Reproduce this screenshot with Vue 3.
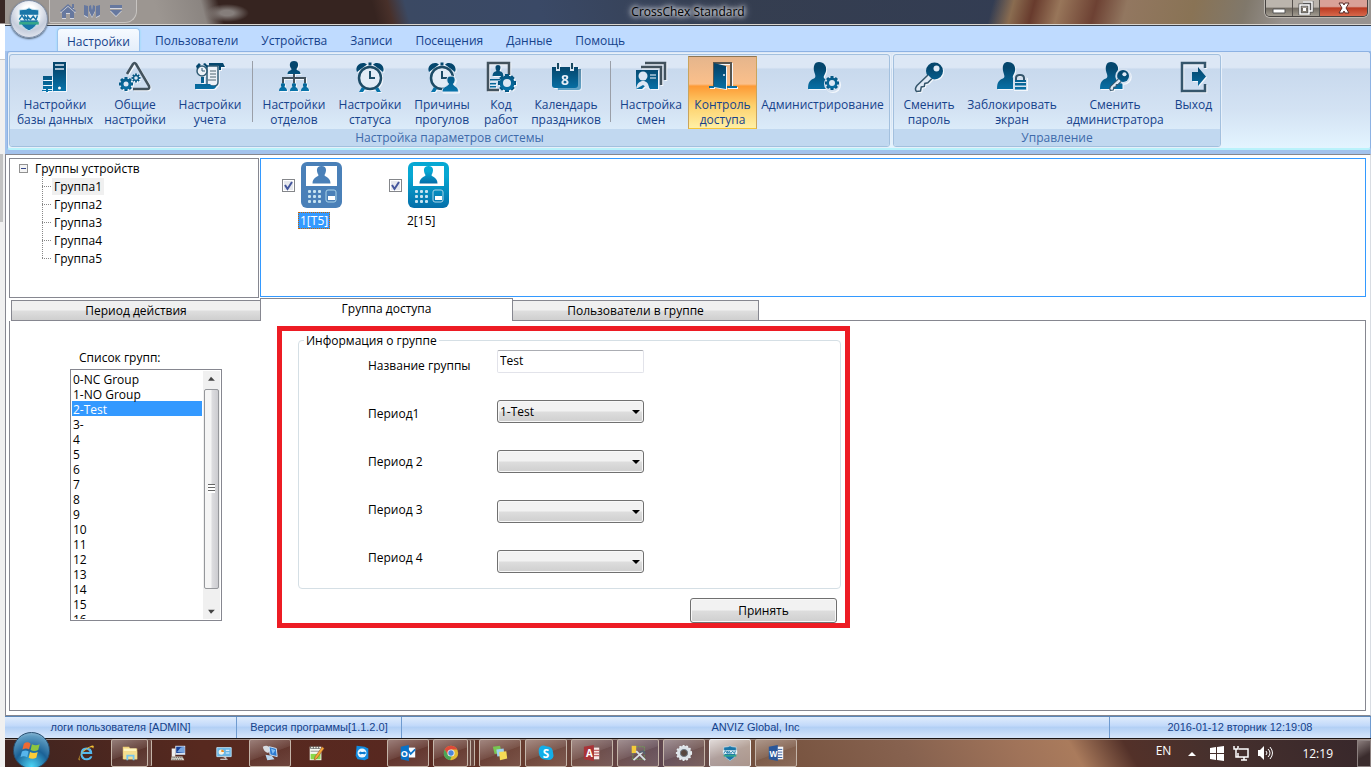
<script setup>
import { ref } from 'vue'

const menu = ['Настройки', 'Пользователи', 'Устройства', 'Записи', 'Посещения', 'Данные', 'Помощь']

const person = 'M12 1c5 0 8 4 7 9-.5 3-3 5-2 7 1.500 2.500 6 2.500 6.500 6.500V28H1c0-7 2-9 6-10.500 2.500-1.500 1-4 .3-6.500C6 6 7 1 12 1z'
const key = '<circle cx="21.500" cy="10" r="8.500"/><circle cx="23.500" cy="7.500" r="3" fill="#dfe9f5"/><path d="M15 14L4 24.500c-1.500 2-2 4.500-.5 6l4-.5.8-4 3-.6.5-3 3-.7 4-4" fill="#dfe9f5" stroke="#35566c" stroke-width="1.500"/>'
const gear = (x, y, r, hole) => {
  let teeth = ''
  for (let i = 0; i < 8; i++) teeth += `<rect x="${x - r / 4}" y="${y - r - 1}" width="${r / 2}" height="3" transform="rotate(${i * 45} ${x} ${y})"/>`
  return `${teeth}<circle cx="${x}" cy="${y}" r="${r - 0.5}"/><circle cx="${x}" cy="${y}" r="${hole}" fill="#dce7f4"/>`
}
const alarm = '<path d="M3 11C1 7 4 2 9 2c2 0 3 .6 4 1.600zM29 11c2-4-1-9-6-9-2 0-3 .6-4 1.600z"/><path d="M14.500 1.500h3v3h-3z"/><circle cx="16" cy="17" r="11" fill="#e2ebf6" stroke="#1d4b66" stroke-width="2.500"/><path d="M16 10v7h5" fill="none" stroke="#1d4b66" stroke-width="2"/><path d="M8 26l-3 5h4l2-3zM24 26l3 5h-4l-2-3z"/>'

const icons = {
  db: '<path d="M14 1h13v29H14z"/><path d="M16 4h9M16 8h9" stroke="#dce7f4" stroke-width="1.500"/><circle cx="20.500" cy="27" r="1.500" fill="#fff"/><path d="M4 15h9v4H4zM4 20h9v4H4zM4 25h9v3H4zM3 29h10v1H3z"/><path d="M7 28h2v3H7z"/>',
  common: '<path d="M8 13L14 3q1.500-2 3 0l13 22q1 3-2 3H14" fill="none" stroke="#42525d" stroke-width="2.500"/>' + gear(7, 23, 6, 2.5) + gear(17, 17, 3.5, 1.8),
  account: '<path d="M15 2h14l2 4h-4v3h-2V5H15z"/><path d="M15 5h9v16q0 4-4 4h-7V5z" fill="#edf2f8" stroke="#315c75" stroke-width="1.500"/><path d="M16 10h6M16 13h6M16 16h6M14 19h8" stroke="#4d6471"/><circle cx="8" cy="10" r="5" fill="#edf2f8" stroke="#315c75" stroke-width="1.500"/><path d="M8 7v3h3" fill="none" stroke="#315c75"/><path d="M2 5l3-3 2 2-4 4zM9 3l2-1 3 3-1 2zM7 16h3v6H7zM1 23h15q1 2 4 2 3 0 3-2-1 5-4 5H1z"/>',
  org: '<path d="M16 0c5 0 5 5 2.500 8 0 2 4 1 4 5h-13c0-4 4-3 4-5C11 5 11 0 16 0z"/><path d="M16 13v8M5 22v-5h22v5M16 17v5" fill="none" stroke="#42525d" stroke-width="2"/><path d="M5 22c3 0 2 3 1.500 4 2 1 2.500 2 2.500 4H1c0-2 .5-3 2.500-4C3 25 2 22 5 22zM16 22c3 0 2 3 1.500 4 2 1 2.500 2 2.500 4h-8c0-2 .5-3 2.500-4C14 25 13 22 16 22zM27 22c3 0 2 3 1.500 4 2 1 2.500 2 2.500 4h-8c0-2 .5-3 2.500-4C25 25 24 22 27 22z"/>',
  alarm,
  reason: alarm + '<path d="M25 15c5 0 5 5 2.500 8 0 3 5 1 5 8H16c0-6 5-5 6.500-8C20 20 20 15 25 15z" stroke="#dce7f4"/>',
  code: '<path d="M14 29H3V2h21v12" fill="none" stroke="#42525d" stroke-width="2.500"/><path d="M13 4c3 0 3 3 1.500 6 3 1 3.500 2 4 5h-11c.5-3 1-4 4-5C10 7 10 4 13 4zM5 18h10v1.500H5zM5 22h6v1.500H5zM5 25h6v1.500H5z"/>' + gear(22, 22, 8, 4),
  calendar: '<path d="M5 8h26v18q0 3-3 3H8z" opacity=".6"/><path d="M2 6h26v18q0 3-3 3H5q-3 0-3-3z"/><path d="M8 2v8M22 2v8" stroke="#dce7f4" stroke-width="4"/><path d="M8 2v6M22 2v6" stroke="#184961" stroke-width="2"/><text x="15" y="24" text-anchor="middle" font-family="Open Sans, sans-serif" font-weight="700" font-size="14" fill="#e5edf7">8</text>',
  shift: '<path d="M10 2h20v17M6 6h20v18" fill="none" stroke="#42525d" stroke-width="2.500"/><path d="M1 9h22v19h-8l-3-5-5 5H1z"/><circle cx="8" cy="15" r="4.500" fill="#dce7f4"/><path d="M1 28c1-6 4-8 7-8s6 2 6 8l-6-4z" fill="#dce7f4"/><path d="M15 14h6M15 17h6" stroke="#a9c5d8" stroke-width="1.500"/>',
  door: '<path d="M7 26V2h17v24" fill="none" stroke="#58554e" stroke-width="2"/><path d="M7 2l12 3v23L7 26z"/><path d="M2 25h5v2H2zM20 25h10v2H20z"/><circle cx="17" cy="14" r="1" fill="#e8edf2"/>',
  admin: `<path d="${person}"/><circle cx="25" cy="23" r="8" fill="#d3e0ef"/>` + gear(25, 22, 6, 3),
  key,
  lock: `<path d="${person}"/><path d="M17 16h14v13H17z" fill="#d3e0ef"/><path d="M20 20v-3q0-3 4-3t4 3v3" fill="none" stroke="#35566c" stroke-width="2"/><path d="M19 19h11v2H19zM19 22h11v2.500H19zM19 26h11v2.500H19z"/>`,
  change: `<path d="${person}"/><g transform="translate(9 8) scale(.7)"><circle cx="21.500" cy="10" r="11" fill="#d3e0ef"/>${key}</g>`,
  exit: '<path d="M27 7V2H4v28h23v-7" fill="none" stroke="#35566c" stroke-width="2.500"/><path d="M14 11h6V6l8 9.500L20 25v-5h-6z"/>',
}

const settings = [
  { icon: 'db', a: 'Настройки', b: 'базы данных' },
  { icon: 'common', a: 'Общие', b: 'настройки' },
  { icon: 'account', a: 'Настройки', b: 'учета' },
  null,
  { icon: 'org', a: 'Настройки', b: 'отделов' },
  { icon: 'alarm', a: 'Настройки', b: 'статуса' },
  { icon: 'reason', a: 'Причины', b: 'прогулов' },
  { icon: 'code', a: 'Код', b: 'работ' },
  { icon: 'calendar', a: 'Календарь', b: 'праздников' },
  null,
  { icon: 'shift', a: 'Настройка', b: 'смен' },
  { icon: 'door', a: 'Контроль', b: 'доступа', active: true },
  { icon: 'admin', a: 'Администрирование', b: '' },
]
const control = [
  { icon: 'key', a: 'Сменить', b: 'пароль' },
  { icon: 'lock', a: 'Заблокировать', b: 'экран' },
  { icon: 'change', a: 'Сменить', b: 'администратора' },
  { icon: 'exit', a: 'Выход', b: '' },
]
const ribbon = [
  { name: 'settings', caption: 'Настройка параметров системы', items: settings },
  { name: 'control', caption: 'Управление', items: control },
]

const tree = ['Группа1', 'Группа2', 'Группа3', 'Группа4', 'Группа5']
const devices = ref([
  { id: 'd1', name: '1[T5]', checked: true, selected: true },
  { id: 'd2', name: '2[15]', checked: true, selected: false },
])
const groups = ['0-NC Group', '1-NO Group', '2-Test', '3-', '4', '5', '6', '7', '8', '9', '10', '11', '12', '13', '14', '15', '16']
const group = ref('2-Test')
const groupName = ref('Test')
const periods = ref([
  { id: 'p1', label: 'Период1', value: '1-Test' },
  { id: 'p2', label: 'Период 2', value: '' },
  { id: 'p3', label: 'Период 3', value: '' },
  { id: 'p4', label: 'Период 4', value: '' },
])

const label = (x, y, size, t) => `<text x="${x}" y="${y}" text-anchor="middle" font-family="Open Sans, sans-serif" font-weight="700" font-size="${size}" fill="#fff">${t}</text>`
const shield = '<path d="M10 2l2 1 5 .5v7q-1 5-7 8-6-3-7-8v-7L8 3z" fill="#1976a8" stroke="#cfe6f2" stroke-width=".7"/><path d="M2 7h16v4H2z" fill="#e7f4f8"/><path d="M3 10.500l2-3 2 3V8l2 2.500V8l2 2.500L13 8l2 2.500 1-3" fill="none" stroke="#1976a8"/><path d="M3 12h14v2H3z" fill="#35a68a"/>'
const tasks = [
  { name: 'Internet Explorer', art: '<path d="M15 13.500Q12 17 8.500 15.500 6 14 6 11h11Q17 4 10.500 4 4 4 4 11q0 7 7 7 5 0 6-4.500z" fill="#54b9ee"/><path d="M6.500 9Q8 6 10.500 6T14 9z" fill="#5a3027"/><path d="M4 18Q0 19 3 13 8 5 16 2q4-1 2 3-1-2-4-1Q6 8 3 14q-1 4 1 4z" fill="#f1bf35"/>' },
  { name: 'Проводник', kind: 'stack1', art: '<path d="M2 3h7l1 2h8v12H2z" fill="#efd27a"/><path d="M3 5h14v3H3z" fill="#fff5bd"/><path d="M3 8h15v9H3z" fill="#f4df90"/><path d="M6 18v-6h9v6h-2v-4H8v4z" fill="#76c6ed"/>' },
  { name: 'Подключение', art: '<path d="M7 2h11v10H7z" fill="#d9e5f4"/><path d="M8 3h9v7H8z" fill="#163f98"/><path d="M9 9l4-5 4-1v7z" fill="#77a4df"/><path d="M3 5h4v9H3z" fill="#eee"/><path d="M3 14h12l2 4H2z" fill="#d5d3c8"/><path d="M4 15h11M3 17h12" stroke="#555" stroke-dasharray="1 1"/>' },
  { name: 'Панель управления', art: '<path d="M2 4h16v10H2z" fill="#69b6e6" stroke="#bfdff2"/><circle cx="7" cy="9" r="3" fill="#f4f4e8"/><path d="M7 9V6a3 3 0 013 3z" fill="#ef8e24"/><path d="M12 7h4M12 10h4" stroke="#fff"/><path d="M8 14h4v3H6h8" stroke="#ccc" fill="#ddd"/>' },
  { name: 'Сеть', kind: 'open', art: '<path d="M2 3q6-3 9 3L8 10Q3 9 2 3z" fill="#d8dde2"/><path d="M9 3l8 2 1 9-8-2z" fill="#2d7ad0" stroke="#d9ebfb"/><path d="M5 12l7 1 3 4-8 1z" fill="#bad7ef"/><path d="M11 5l5 2-3 4z" fill="#83bef2"/>' },
  { name: 'Блокнот', art: '<path d="M3 3h13v15H3z" fill="#f5f7ee"/><path d="M4 5h11M4 8h11" stroke="#888"/><path d="M4 11h11v6H4z" fill="#88d94b"/><path d="M4 2v3M7 2v3M10 2v3M13 2v3" stroke="#555"/><path d="M17 3l2 2-8 11-3 2 1-4z" fill="#f4a83a" stroke="#8c4824" stroke-width=".6"/>' },
  { name: 'TeamViewer', art: '<path d="M4 2l9 1 4 2v11l-4 2-8-1-2-4z" fill="#118be0"/><circle cx="10" cy="10" r="5" fill="#eaf6ff"/><path d="M6 10l3-2v1h3V8l3 2-3 2v-1H9v1z" fill="#087bd2"/>' },
  { name: 'Outlook', kind: 'open', art: '<path d="M8 4h10v11H8z" fill="#f7fbff"/><path d="M10 7l3 4 5-5" fill="none" stroke="#0c75ca" stroke-width="2"/><path d="M2 3l9-2v18l-9-2z" fill="#0872c8"/>' + label(6, 14, 10, 'O') },
  { name: 'Chrome', kind: 'stack2', art: '<circle cx="10" cy="10" r="8" fill="#e1ba31"/><path d="M10 2a8 8 0 017 4H10L6 12 3 6a8 8 0 017-4z" fill="#df4a3a"/><path d="M3 6l4 7h4l-2 5A8 8 0 013 6z" fill="#4aa657"/><circle cx="10" cy="10" r="4" fill="#eee"/><circle cx="10" cy="10" r="3" fill="#4a86db"/>' },
  { name: 'Заметки', kind: 'open', art: '<path d="M2 3l8-1 2 8-8 1z" fill="#78c651"/><path d="M6 6l8-1 1 8-8 1z" fill="#9ed1ed"/><path d="M9 9l8-1 1 8-8 2z" fill="#f5da55"/>' },
  { name: 'Skype', kind: 'open', art: '<path d="M5 2q3-1 5 .5 8 0 8 8 1 3-.5 5-2 3-6 2Q3 18 2 10 1 4 5 2z" fill="#13aee8"/>' + label(10, 15, 13, 'S') },
  { name: 'Access', kind: 'open', art: '<path d="M12 4h6v13h-6z" fill="#f8e9e7"/><path d="M12 7h6M12 10h6M12 13h6" stroke="#ad3335"/><path d="M1 3l11-2v18L1 17z" fill="#a93438"/>' + label(7, 14, 11, 'A') },
  { name: 'Инструменты', kind: 'open', art: '<path d="M5 3h12v14H4z" fill="none" stroke="#6ca252" stroke-dasharray="2 1"/><path d="M3 2h5v8H3z" fill="#f4cb3a"/><path d="M5 18l10-9M8 8l10 10" stroke="#d8e1e6" stroke-width="2"/><path d="M12 9l4-1 2 3" fill="none" stroke="#586371" stroke-width="2"/>' },
  { name: 'Службы', kind: 'open', art: '<circle cx="10" cy="10" r="6" fill="none" stroke="#dce2e7" stroke-width="4"/><circle cx="10" cy="10" r="8" fill="none" stroke="#e7edf1" stroke-width="2" stroke-dasharray="2 2"/><circle cx="10" cy="10" r="4" fill="#57473f" stroke="#71808c"/>' },
  { name: 'CrossChex', kind: 'active', art: shield },
  { name: 'Word', kind: 'open', art: '<path d="M11 3h7v14h-7z" fill="#f7f9fc"/><path d="M12 6h5M12 9h5M12 12h5M12 15h5" stroke="#2a579a"/><path d="M2 3l10-2v18L2 17z" fill="#2a579a"/>' + label(7, 14, 9, 'W') },
]
</script>

<template>
  <div class="screen">
    <div class="behind"></div>
    <div class="window">
      <svg class="defs" aria-hidden="true">
        <linearGradient id="ink" x1="0" y1="0" x2="0" y2="32" gradientUnits="userSpaceOnUse">
          <stop offset="0.2" stop-color="#04466d" /><stop offset="1" stop-color="#0878b0" />
        </linearGradient>
        <linearGradient id="cyan" x1="0" y1="0" x2="0" y2="1">
          <stop offset="0.3" stop-color="#07a8d3" /><stop offset="1" stop-color="#046ea9" />
        </linearGradient>
      </svg>

      <header class="titlebar">
        <button class="orb" aria-label="Меню программы"><svg viewBox="0 0 20 20" v-html="shield"></svg></button>
        <div class="quick">
          <button aria-label="Домой"><svg viewBox="0 0 16 16"><path d="M0 8l8-7 8 7-1 1-7-6-7 6z" /><path d="M2 9l6-5 6 5v6h-4v-5H6v5H2z" /><path d="M12 1h2v4h-2z" /></svg></button>
          <button aria-label="Вид"><svg viewBox="0 0 16 16"><path d="M0 2l4 1v11l-4-2zM12 3l4-1v10l-4 2zM5 3l2-1 1 5 1-5 2 1v5l-3 6-3-6z" /></svg></button>
          <button aria-label="Настроить панель"><svg viewBox="0 0 16 16"><path d="M2 2h12v3H2zM2 7h12l-6 6z" /></svg></button>
        </div>
        <h1>CrossChex Standard</h1>
        <div class="winbtns">
          <button aria-label="Свернуть"><svg viewBox="0 0 16 14"><path d="M2 8h12v4H2z" fill="#fff" stroke="#555" /></svg></button>
          <button aria-label="Восстановить"><svg viewBox="0 0 16 14"><path d="M5 1h9v9h-3M2 4h9v9H2z" fill="none" stroke="#555" stroke-width="3" /><path d="M5 1h9v9h-3M2 4h9v9H2z" fill="none" stroke="#fff" stroke-width="1.500" /><path d="M5 7h3v3H5z" fill="#fff" /></svg></button>
          <button class="close" aria-label="Закрыть"><svg viewBox="0 0 16 14"><path d="M3 2h4l1 2 1-2h4l-3 5 3 5H9L8 10l-1 2H3l3-5z" fill="#fff" stroke="#5b2c29" /></svg></button>
        </div>
      </header>

      <nav class="menu">
        <button v-for="(m, i) in menu" :key="m" :class="{ on: i === 0 }">{{ m }}</button>
      </nav>

      <div class="ribbon">
        <section v-for="g in ribbon" :key="g.name" class="rgroup" :class="g.name">
          <div class="items">
            <template v-for="(b, i) in g.items" :key="i">
              <button v-if="b" :class="{ active: b.active }">
                <svg viewBox="0 0 32 32" fill="url(#ink)" v-html="icons[b.icon]"></svg>
                <span>{{ b.a }}</span><span>{{ b.b }}</span>
              </button>
              <i v-else class="sep"></i>
            </template>
          </div>
          <div class="caption">{{ g.caption }}</div>
        </section>
      </div>

      <main class="main">
        <div class="top">
          <div class="tree">
            <div class="root"><button class="expander" aria-label="Свернуть группу"></button><span>Группы устройств</span></div>
            <ul>
              <li v-for="(t, i) in tree" :key="t"><span :class="{ picked: i === 0 }">{{ t }}</span></li>
            </ul>
          </div>
          <div class="devices">
            <div v-for="d in devices" :key="d.id" class="device">
              <span class="tick">
                <input :id="d.id" v-model="d.checked" type="checkbox">
                <svg v-if="d.checked" viewBox="0 0 13 13"><path d="M3 6l2.500 4L10 3" fill="none" stroke="#44569c" stroke-width="2" /></svg>
              </span>
              <svg class="reader" :class="{ dim: d.selected }" viewBox="0 0 41 48">
                <rect class="case" x="0" y="1" width="41" height="46" rx="6" />
                <path d="M5 5h31v20H5z" fill="#fff" />
                <path class="case" d="M20.500 5c6 0 5 6 3 9 0 2 6 2 6 8.500h-18c0-6.500 6-6.500 6-8.500-2-3-3-9 3-9z" />
                <g fill="#c7e3f1">
                  <template v-for="r in 3" :key="r"><rect v-for="c in 3" :key="c" :x="2 + c * 5" :y="24 + r * 5" width="3" height="3" rx="1" /></template>
                </g>
                <rect x="25" y="29" width="10" height="12" rx="2" fill="none" stroke="#a9d3e8" />
                <path d="M27 35h7v4h-7z" fill="#fff" />
              </svg>
              <label :for="d.id" :class="{ chosen: d.selected }">{{ d.name }}</label>
            </div>
          </div>
        </div>

        <div class="tabs" role="tablist">
          <button role="tab">Период действия</button>
          <button role="tab" class="on" aria-selected="true">Группа доступа</button>
          <button role="tab">Пользователи в группе</button>
          <i></i>
        </div>

        <div class="page">
          <div class="grouplist">
            <label for="groups">Список групп:</label>
            <div class="listbox">
              <select id="groups" v-model="group" size="16">
                <option v-for="g in groups" :key="g">{{ g }}</option>
              </select>
              <div class="scroll" aria-hidden="true">
                <svg viewBox="0 0 17 17"><path d="M5 10l3-4 4 4z" /></svg>
                <i></i>
                <svg viewBox="0 0 17 17"><path d="M5 7h7l-4 4z" /></svg>
              </div>
            </div>
          </div>

          <form class="frame" @submit.prevent>
            <fieldset>
              <legend>Информация о группе</legend>
              <div class="labels">
                <label for="gname">Название группы</label>
                <label v-for="p in periods" :key="p.id" :for="p.id">{{ p.label }}</label>
              </div>
              <div class="controls">
                <input id="gname" v-model="groupName" type="text">
                <span v-for="p in periods" :key="p.id" class="combo">
                  <select :id="p.id" v-model="p.value"><option></option><option>1-Test</option></select>
                </span>
              </div>
            </fieldset>
            <button class="apply" type="submit">Принять</button>
          </form>
        </div>
      </main>

      <footer class="status">
        <span>логи пользователя [ADMIN]</span>
        <span>Версия программы[1.1.2.0]</span>
        <span>ANVIZ Global, Inc</span>
        <span>2016-01-12 вторник 12:19:08</span>
      </footer>

      <div class="taskbar">
        <button class="start" aria-label="Пуск">
          <svg viewBox="0 0 24 24"><path d="M4 5q4-3 7 0l-1.500 6q-3-2-7 0z" fill="#ee6a32" /><path d="M12.500 5.500q4 2 8 0L19 11.500q-4 2-8 0z" fill="#8dc63f" /><path d="M2 13q4-2 7 0l-1.500 6q-4-2-7 0z" fill="#57b5ec" /><path d="M10.500 13.500q4 2 8 0L17 19.500q-4 2-8 0z" fill="#fccb37" /></svg>
        </button>
        <div class="apps">
          <button v-for="t in tasks" :key="t.name" :class="t.kind" :aria-label="t.name"><span><svg viewBox="0 0 20 20" v-html="t.art"></svg></span></button>
        </div>
        <div class="tray">
          <span class="lang">EN</span>
          <svg class="up" viewBox="0 0 8 5"><path d="M0 5l4-4 4 4z" /></svg>
          <svg viewBox="0 0 16 16"><path d="M1 3l6-1v6H1zM8 2l7-1v7H8zM1 9h6v6l-6-1zM8 9h7v7l-7-1z" /></svg>
          <svg viewBox="0 0 16 16"><path d="M6 4h9v8H5V8M8 15h6M11 12v3M1 1v3h4V1M3 4v8h2" fill="none" stroke="#fff" stroke-width="1.500" /></svg>
          <svg viewBox="0 0 16 16"><path d="M1 5h2l4-4v14l-4-4H1z" /><path d="M9 6q2 2 0 4M11 4q4 4 0 8M13 2q5 6 0 12" fill="none" stroke="#fff" /></svg>
          <time>12:19</time>
        </div>
        <button class="peek" aria-label="Показать рабочий стол"></button>
      </div>
    </div>
  </div>
</template>

<style>
body { background: #f0f0f0; }
</style>

<style scoped>
* { box-sizing: border-box; }
.screen {
  display: grid;
  grid-template-columns: 5px 1fr;
  min-height: 100vh;
  font: 12px/15px "Open Sans", "Noto Sans", sans-serif;
  color: #000;
}
button, input, select { font: inherit; color: inherit; margin: 0; }
button { padding: 0; border: 0; background: none; }
svg { display: block; }
.behind {
  background:
    linear-gradient(#c2c2c2, #c2c2c2) 0 154px / 3px 68px no-repeat,
    linear-gradient(#392824 0 23px, #fff 24px 59px, #c8c8c8 59px 60px, #f0f0f0 60px);
}
.window { display: flex; flex-direction: column; min-width: 0; background: #a3c2ec; }
.defs { position: absolute; width: 0; height: 0; }

.titlebar {
  position: relative;
  display: flex;
  justify-content: center;
  height: 26px;
  padding-bottom: 3px;
  border-bottom: 1px solid #39414d;
  box-shadow: inset 0 -1px #d9d5cf;
  background:
    radial-gradient(ellipse 22px 9px at 222px 13px, #857e7b 30%, transparent),
    linear-gradient(75deg, #9c9691 0 150px, #8b8581 195px, transparent 212px),
    linear-gradient(105deg, transparent 955px, #8a6c50 975px, #683b2d 995px, #98765a 1020px, #6d4133 1055px, #927760 1085px, #897355 1150px, #80786b 1200px, #989390 1240px),
    linear-gradient(75deg, #362420 0 360px, #48302a 375px, #3b4963 392px, #3a4966 520px, #353e50 700px, #303b56);
}
h1 { margin: 0; align-self: center; font: inherit; text-shadow: 0 0 4px #fff, 0 0 6px #fff, 0 0 8px #ccd; }
.orb {
  position: absolute;
  left: 5px;
  top: 0;
  z-index: 2;
  width: 38px;
  height: 38px;
  padding: 4px;
  border: 1px solid #8190a8;
  border-radius: 50%;
  background: radial-gradient(circle at 50% 30%, #fff 20%, #c5cddc 60%, #f5f7fb);
  box-shadow: 0 1px 2px #456;
}
.quick {
  position: absolute;
  left: 44px;
  top: 0;
  display: flex;
  align-items: center;
  gap: 8px;
  height: 23px;
  padding: 0 12px 0 10px;
  border: 1px solid #c7c4c1;
  border-top: 0;
  border-radius: 0 0 12px 2px;
  background: #a19d9b;
}
.quick svg { width: 16px; height: 16px; fill: #66789f; filter: drop-shadow(0 1px 0 #d4d6de); }
.winbtns {
  position: absolute;
  right: 3px;
  top: 0;
  display: flex;
  height: 17px;
  border: 1px solid #454240;
  border-top: 0;
  border-radius: 0 0 5px 5px;
  box-shadow: 0 0 0 1px #bcb7b0;
  overflow: hidden;
}
.winbtns button {
  display: flex;
  justify-content: center;
  align-items: center;
  width: 27px;
  border-right: 1px solid #55504c;
  background: linear-gradient(#bbb5ad 45%, #716b62 50%, #a29c91);
}
.winbtns svg { width: 16px; height: 14px; }
.winbtns .close { width: 47px; border: 0; background: linear-gradient(#d9a197 40%, #ba3b22 50%, #d8684b); }

.menu { display: flex; align-items: flex-end; height: 25px; padding-left: 52px; background: #bfdbff; color: #15428b; }
.menu button { height: 23px; padding: 2px 12px 0 11px; }
.menu button.on {
  margin-right: 4px;
  padding: 2px 9px 0;
  border: 1px solid #9dc4ee;
  border-bottom: 0;
  border-radius: 4px 4px 0 0;
  background: linear-gradient(#f6faff, #e4eefa);
  box-shadow: 0 0 2px #7fe0f5;
}
.ribbon {
  display: flex;
  gap: 3px;
  margin: 0 0 4px 2px;
  padding: 2px 1px 1px;
  border: 1px solid #8db2e3;
  border-bottom: 2px solid #b9f2fb;
  border-radius: 3px;
  background: linear-gradient(#dce7f5 0 16%, #c8d9ed 18%, #d3e2f3 60%, #e3f4ff);
  color: #15428b;
}
.rgroup { border: 1px solid #a3c0de; border-radius: 3px; overflow: hidden; box-shadow: 0 0 0 1px #e7f0fa; }
.items { display: grid; height: 74px; padding: 1px 1px 0 2px; }
.settings .items { grid-template-columns: 86px 74px 76px 8px 76px 76px 68px 50px 80px 8px 74px 69px 131px; }
.control .items { grid-template-columns: 66px 100px 106px 51px; }
.items button { display: flex; flex-direction: column; align-items: center; padding-top: 4px; height: 73px; border: 1px solid transparent; white-space: nowrap; }
.items svg { width: 32px; height: 32px; margin-bottom: 4px; overflow: visible; filter: drop-shadow(1px 1px 0 #f3f7fc); }
.items .active {
  border-color: #8e7654 #c9a45d #f5c436;
  background: linear-gradient(#e5b58c, #fbc08b 38%, #fd9a35 41%, #fdd06c 68%, #fff0a5);
}
.sep { width: 1px; height: 61px; margin: 5px auto 0; background: #9a9fa8; }
.caption { height: 17px; line-height: 17px; text-align: center; background: #c1d8f0; color: #3e6aaa; }

.main { flex: 1; display: flex; flex-direction: column; padding: 3px 4px 4px 3px; border: 1px solid #868790; border-right-color: #d8dce2; background: #fff; }
.top { display: grid; grid-template-columns: 250px 1fr; gap: 1px; height: 140px; }
.tree { padding: 0 9px; border: 1px solid #868790; }
.root { display: flex; align-items: center; gap: 7px; height: 18px; }
.expander { width: 9px; height: 9px; border: 1px solid #919191; background: linear-gradient(#35478a, #35478a) center / 5px 1px no-repeat, #f4f4f4; }
ul { list-style: none; margin: 0 0 0 23px; padding: 0; }
li {
  display: flex;
  align-items: center;
  height: 18px;
  padding-left: 10px;
  background:
    repeating-linear-gradient(#888 0 1px, transparent 1px 2px) 0 0 / 1px 100% no-repeat,
    repeating-linear-gradient(90deg, #888 0 1px, transparent 1px 2px) 0 50% / 9px 1px no-repeat;
}
li:last-child { background-size: 1px 50%, 9px 1px; }
li span { padding: 1px 2px; }
.picked { background: #f0f0f0; }
.devices { display: flex; gap: 47px; margin-bottom: 1px; padding: 2px 21px; border: 1px solid #3399ff; }
.device { display: grid; grid-template-columns: 13px 41px; grid-template-rows: 48px auto; gap: 3px 6px; align-content: start; align-items: center; }
.tick { position: relative; height: 13px; }
.tick input { display: block; appearance: none; width: 13px; height: 13px; border: 1px solid #84868a; background: #e6e8ed; box-shadow: inset 0 0 0 1px #fff; }
.tick svg { position: absolute; inset: 0; pointer-events: none; }
.reader { width: 41px; height: 48px; }
.case { fill: url(#cyan); }
.dim .case { fill: #4a80b8; }
.device label { grid-column: 1 / 3; justify-self: start; margin-left: 16px; padding: 0 1px; border: 1px solid transparent; }
.device .chosen { background: #3399ff; color: #fff; border: 1px dotted #cc6600; }

.tabs { display: grid; grid-template-columns: 251px 253px 246px 1fr; height: 23px; align-items: end; }
.tabs button { height: 21px; border: 1px solid #868790; background: linear-gradient(#f0f0f0 48%, #dedede 52%, #cfcfcf); }
.tabs button:first-child { margin-left: 2px; border-right: 0; }
.tabs .on { height: 23px; padding-bottom: 3px; background: #fff; border-bottom: 0; }
.tabs button:nth-child(3) { border-left: 0; }
.tabs i { border-bottom: 1px solid #868790; }
.page { flex: 1; display: flex; align-items: flex-start; padding: 5px 0 0 60px; border: 1px solid #868790; border-top: 0; }
.grouplist { width: 152px; margin-right: 55px; padding-top: 24px; }
.grouplist label { display: block; margin: 0 0 4px 9px; }
.listbox { display: flex; height: 252px; padding: 1px; border: 1px solid #868790; }
.listbox select { flex: 1; min-width: 0; height: 248px; padding: 0; border: 0; outline: 0; background: #fff; scrollbar-width: none; overflow: hidden; appearance: none; }
.listbox option { height: 15px; min-height: 15px; padding: 0 1px; line-height: 15px; color: #000; }
.listbox option:checked { background: linear-gradient(#3399ff, #3399ff); color: #fff; }
.scroll { display: flex; flex-direction: column; width: 17px; margin-left: 1px; background: #f0f0f0; }
.scroll svg { width: 17px; height: 17px; fill: #444; }
.scroll i {
  flex: none;
  height: 200px;
  margin: 1px 1px 14px;
  border: 1px solid #95979b;
  border-radius: 2px;
  background:
    repeating-linear-gradient(#666 0 1px, #fff 1px 3px) center / 7px 9px no-repeat,
    linear-gradient(90deg, #f5f5f5 45%, #dcdcdf 55%, #ccccd0);
}
.frame { display: flex; flex-direction: column; width: 573px; height: 302px; padding: 2px 4px 0 16px; border: 5px solid #ed1c24; }
fieldset { display: flex; margin: 0; padding: 2px 0 0 69px; height: 257px; border: 1px solid #d5dfe5; border-radius: 4px; }
legend { margin-left: -64px; padding: 0 2px; }
.labels { display: flex; flex-direction: column; gap: 33px; width: 129px; padding-top: 8px; }
.controls { display: flex; flex-direction: column; gap: 27px; width: 147px; }
.controls input { height: 23px; padding: 0 2px 2px; border: 1px solid #e2e3ea; border-top-color: #abadb3; border-radius: 2px; background: #fff; }
.combo { position: relative; display: block; height: 23px; }
.combo::after { content: ""; position: absolute; right: 4px; top: 10px; border: 4px solid transparent; border-top-color: #000; border-bottom: 0; pointer-events: none; }
.combo select, .apply {
  width: 100%;
  height: 23px;
  padding: 0 2px;
  border: 1px solid #707070;
  border-radius: 3px;
  appearance: none;
  background: linear-gradient(#f2f2f2 48%, #dddddd 52%, #cfcfcf);
  box-shadow: inset 0 0 0 1px #f8f8f8;
}
.apply { align-self: flex-end; width: 147px; height: 25px; margin: 9px 4px 0 0; }

.status {
  display: grid;
  grid-template-columns: 232px 165px 708px 1fr;
  height: 22px;
  border-top: 1px solid #5b87b9;
  background: linear-gradient(#e0ecfc, #c3dafa 40%, #b3d0f5 50%, #d6e6fb);
  font: 11px/21px "Liberation Sans", Arial, sans-serif;
  color: #15428b;
  text-align: center;
}
.status span { white-space: nowrap; border-right: 1px solid #6f9bd0; }

.taskbar {
  position: relative;
  display: flex;
  height: 29px;
  border-top: 1px solid #1b1413;
  box-shadow: inset 0 1px #a08e86;
  color: #fff;
  background: linear-gradient(60deg, #3e2420, #57291f 15%, #582820 30%, #6b4032 40%, #5e4650 48%, #75513d 55%, #87624f 66%, #a07359 74%, #aa7b5c 78%, #533129 82%, #46302d 88%, #37272b);
}
.start {
  position: absolute;
  left: 8px;
  top: -7px;
  width: 37px;
  height: 37px;
  padding: 6px;
  border: 1px solid #274e70;
  border-radius: 50%;
  background: radial-gradient(circle at 50% 95%, #4bd4f5, #1b6297 45%, #5f9cc2 80%, #b3d1e3);
}
.apps { display: flex; padding-left: 58px; }
.apps button { width: 46px; padding: 0 2px; }
.apps span { display: flex; align-items: center; justify-content: center; width: 42px; height: 28px; }
.apps svg { width: 18px; height: 18px; }
.apps .open span, .apps .active span, .apps .stack1 span, .apps .stack2 span {
  border: 1px solid #c5b5a9;
  border-radius: 2px;
  background: linear-gradient(160deg, #ffffff66, #ffffff22 50%, #ffffff11 52%, #ffffff22);
}
.apps .active span { background: linear-gradient(160deg, #ffffffcc, #ffffff77 50%, #ffffff66); border-color: #eee; }
.apps .stack1 span { width: 37px; box-shadow: 4px 0 0 -1px #6b4a42, 5px 0 0 -1px #c5b5a9; }
.apps .stack2 span { width: 35px; box-shadow: 3px 0 0 -1px #6b4a42, 4px 0 0 -1px #c5b5a9, 7px 0 0 -1px #6b4a42, 8px 0 0 -1px #c5b5a9; }
.tray { display: flex; align-items: center; gap: 8px; margin-left: auto; padding-right: 24px; }
.tray svg { width: 16px; height: 16px; fill: #fff; }
.tray .up { width: 8px; height: 5px; margin: 0 5px 0 9px; }
.lang { padding-bottom: 6px; }
.tray time { margin-left: 21px; }
.peek { width: 14px; margin-top: 1px; border: 1px solid #8c8180; background: linear-gradient(150deg, #8a7d7c, #3a2c2d 60%); }
</style>
